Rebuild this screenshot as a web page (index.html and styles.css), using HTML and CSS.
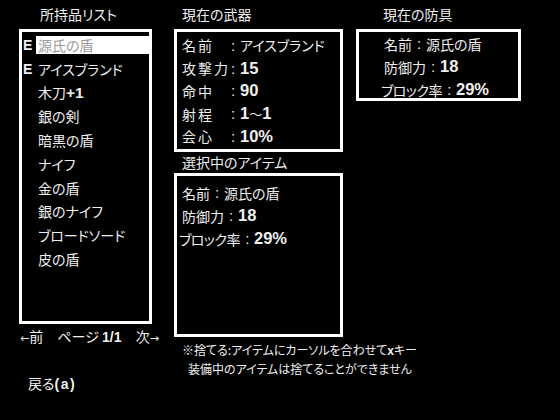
FILE: index.html
```html
<!DOCTYPE html>
<html lang="ja">
<head>
<meta charset="utf-8">
<title>所持品リスト</title>
<link rel="stylesheet" href="styles.css">
</head>
<body>
<main class="screen">
  <section class="col col-list">
    <h2 class="title">所持品リスト</h2>
    <div class="frame list">
      <ul class="items">
        <li class="item"><span class="mark">E</span><span class="name selected">源氏の盾</span></li>
        <li class="item"><span class="mark">E</span><span class="name">アイスブランド</span></li>
        <li class="item"><span class="mark"></span><span class="name">木刀<b class="num">+1</b></span></li>
        <li class="item"><span class="mark"></span><span class="name">銀の剣</span></li>
        <li class="item"><span class="mark"></span><span class="name">暗黒の盾</span></li>
        <li class="item"><span class="mark"></span><span class="name">ナイフ</span></li>
        <li class="item"><span class="mark"></span><span class="name">金の盾</span></li>
        <li class="item"><span class="mark"></span><span class="name">銀のナイフ</span></li>
        <li class="item"><span class="mark"></span><span class="name">ブロードソード</span></li>
        <li class="item"><span class="mark"></span><span class="name">皮の盾</span></li>
      </ul>
    </div>
    <div class="pager">
      <span class="prev"><span class="arrow">←</span>前</span>
      <span class="page">ページ <b class="num">1/1</b></span>
      <span class="next">次<span class="arrow">→</span></span>
    </div>
    <div class="back">戻る<b class="num">(a)</b></div>
  </section>

  <section class="col col-weapon">
    <h2 class="title">現在の武器</h2>
    <div class="frame stats weapon">
      <div class="row"><span class="label">名前</span><span class="colon">:</span><span class="value">アイスブランド</span></div>
      <div class="row"><span class="label">攻撃力</span><span class="colon">:</span><b class="num">15</b></div>
      <div class="row"><span class="label">命中</span><span class="colon">:</span><b class="num">90</b></div>
      <div class="row"><span class="label">射程</span><span class="colon">:</span><b class="num">1<span class="tilde">〜</span>1</b></div>
      <div class="row"><span class="label">会心</span><span class="colon">:</span><b class="num">10%</b></div>
    </div>
    <h2 class="title sub">選択中のアイテム</h2>
    <div class="frame stats selected-item">
      <div class="row">名前<span class="colon">:</span>源氏の盾</div>
      <div class="row">防御力<span class="colon">:</span><b class="num">18</b></div>
      <div class="row wide">ブロック率<span class="colon">:</span><b class="num">29%</b></div>
    </div>
    <p class="note">
      <span class="line">※捨てる:アイテムにカーソルを合わせて<b class="key">x</b>キー</span>
      <span class="line indent">装備中のアイテムは捨てることができません</span>
    </p>
  </section>

  <section class="col col-armor">
    <h2 class="title">現在の防具</h2>
    <div class="frame stats armor">
      <div class="row">名前<span class="colon">:</span>源氏の盾</div>
      <div class="row">防御力<span class="colon">:</span><b class="num">18</b></div>
      <div class="row wide">ブロック率<span class="colon">:</span><b class="num">29%</b></div>
    </div>
  </section>
</main>
</body>
</html>
```

FILE: styles.css
```css
html, body {
  margin: 0;
  padding: 0;
  background: #000;
}

body {
  width: 560px;
  height: 420px;
  overflow: hidden;
  color: #efefef;
  font-family: "Noto Sans CJK JP", "Noto Sans", sans-serif;
  font-size: 14px;
  font-feature-settings: "palt";
}

.screen {
  display: flex;
  padding-left: 19px;
}

.col {
  display: flex;
  flex-direction: column;
}

.col-list { width: 133px; }
.col-weapon { width: 169px; margin-left: 22px; }
.col-armor { width: 165px; margin-left: 13px; }

.title {
  margin: 0;
  font-size: 14px;
  font-weight: 400;
  height: 29px;
  line-height: 28px;
  white-space: nowrap;
}

.col-list .title { padding-left: 21px; }
.col-weapon .title { padding-left: 8px; }
.col-armor .title { padding-left: 27px; }

.title.sub {
  height: 21px;
  line-height: 21px;
}

.frame {
  box-sizing: border-box;
  border: 3px solid #fff;
}

.num {
  font-family: "Liberation Sans", Arial, sans-serif;
  font-weight: 700;
  font-size: 16.5px;
}

.tilde {
  font-family: "Noto Sans CJK JP", sans-serif;
  font-weight: 400;
  font-size: 13px;
}

/* item list */
.list { height: 295px; }

.items {
  list-style: none;
  margin: 0;
  padding: 1px 0 0;
}

.item {
  display: flex;
  align-items: center;
  height: 23.8px;
  white-space: nowrap;
}

.item .num { font-size: 15.5px; }

.mark {
  width: 13px;
  padding-left: 1px;
  font-family: "Liberation Sans", Arial, sans-serif;
  font-weight: 700;
  font-size: 14px;
}

.name {
  flex: 1;
  height: 18px;
  line-height: 18px;
  padding-left: 2px;
}

.name.selected {
  background: #fff;
  color: #9a9a9a;
}

.pager {
  display: flex;
  justify-content: space-between;
  width: 139px;
  margin-left: 1px;
  margin-top: 2px;
  line-height: 20px;
  white-space: nowrap;
}

.pager .num { font-size: 14px; }

.arrow {
  font-family: "DejaVu Sans", sans-serif;
  font-size: 11px;
}

.back {
  margin-top: 24px;
  padding-left: 9px;
  line-height: 20px;
}

.back .num {
  font-size: 14px;
  letter-spacing: 1.5px;
}

/* status frames */
.stats .row {
  display: flex;
  align-items: center;
  white-space: nowrap;
}

.weapon {
  height: 123px;
  padding: 2px 0 0 5px;
}

.weapon .row { height: 22.75px; }

.label {
  width: 46px;
  letter-spacing: 2px;
}

.colon {
  display: inline-block;
  width: 14px;
  text-align: center;
  font-family: "Liberation Sans", Arial, sans-serif;
  font-weight: 400;
  font-size: 15px;
}

.weapon .colon { width: 10px; margin-right: 2px; }

.selected-item {
  height: 164px;
  padding: 5px 0 0 5px;
}

.selected-item .row { height: 23px; }

.row.wide {
  margin-left: -3px;
  letter-spacing: -0.5px;
}

.row.wide .num { letter-spacing: 0; }

.armor {
  height: 72px;
  padding: 0 0 0 25px;
}

.armor .row { height: 23px; }

.note {
  margin: 4px 0 0 8px;
  font-size: 12px;
  line-height: 17px;
  white-space: nowrap;
}

.note .line { display: block; }
.note .indent { padding-left: 6px; }

.key {
  font-family: "Liberation Sans", Arial, sans-serif;
  font-weight: 700;
}
```
